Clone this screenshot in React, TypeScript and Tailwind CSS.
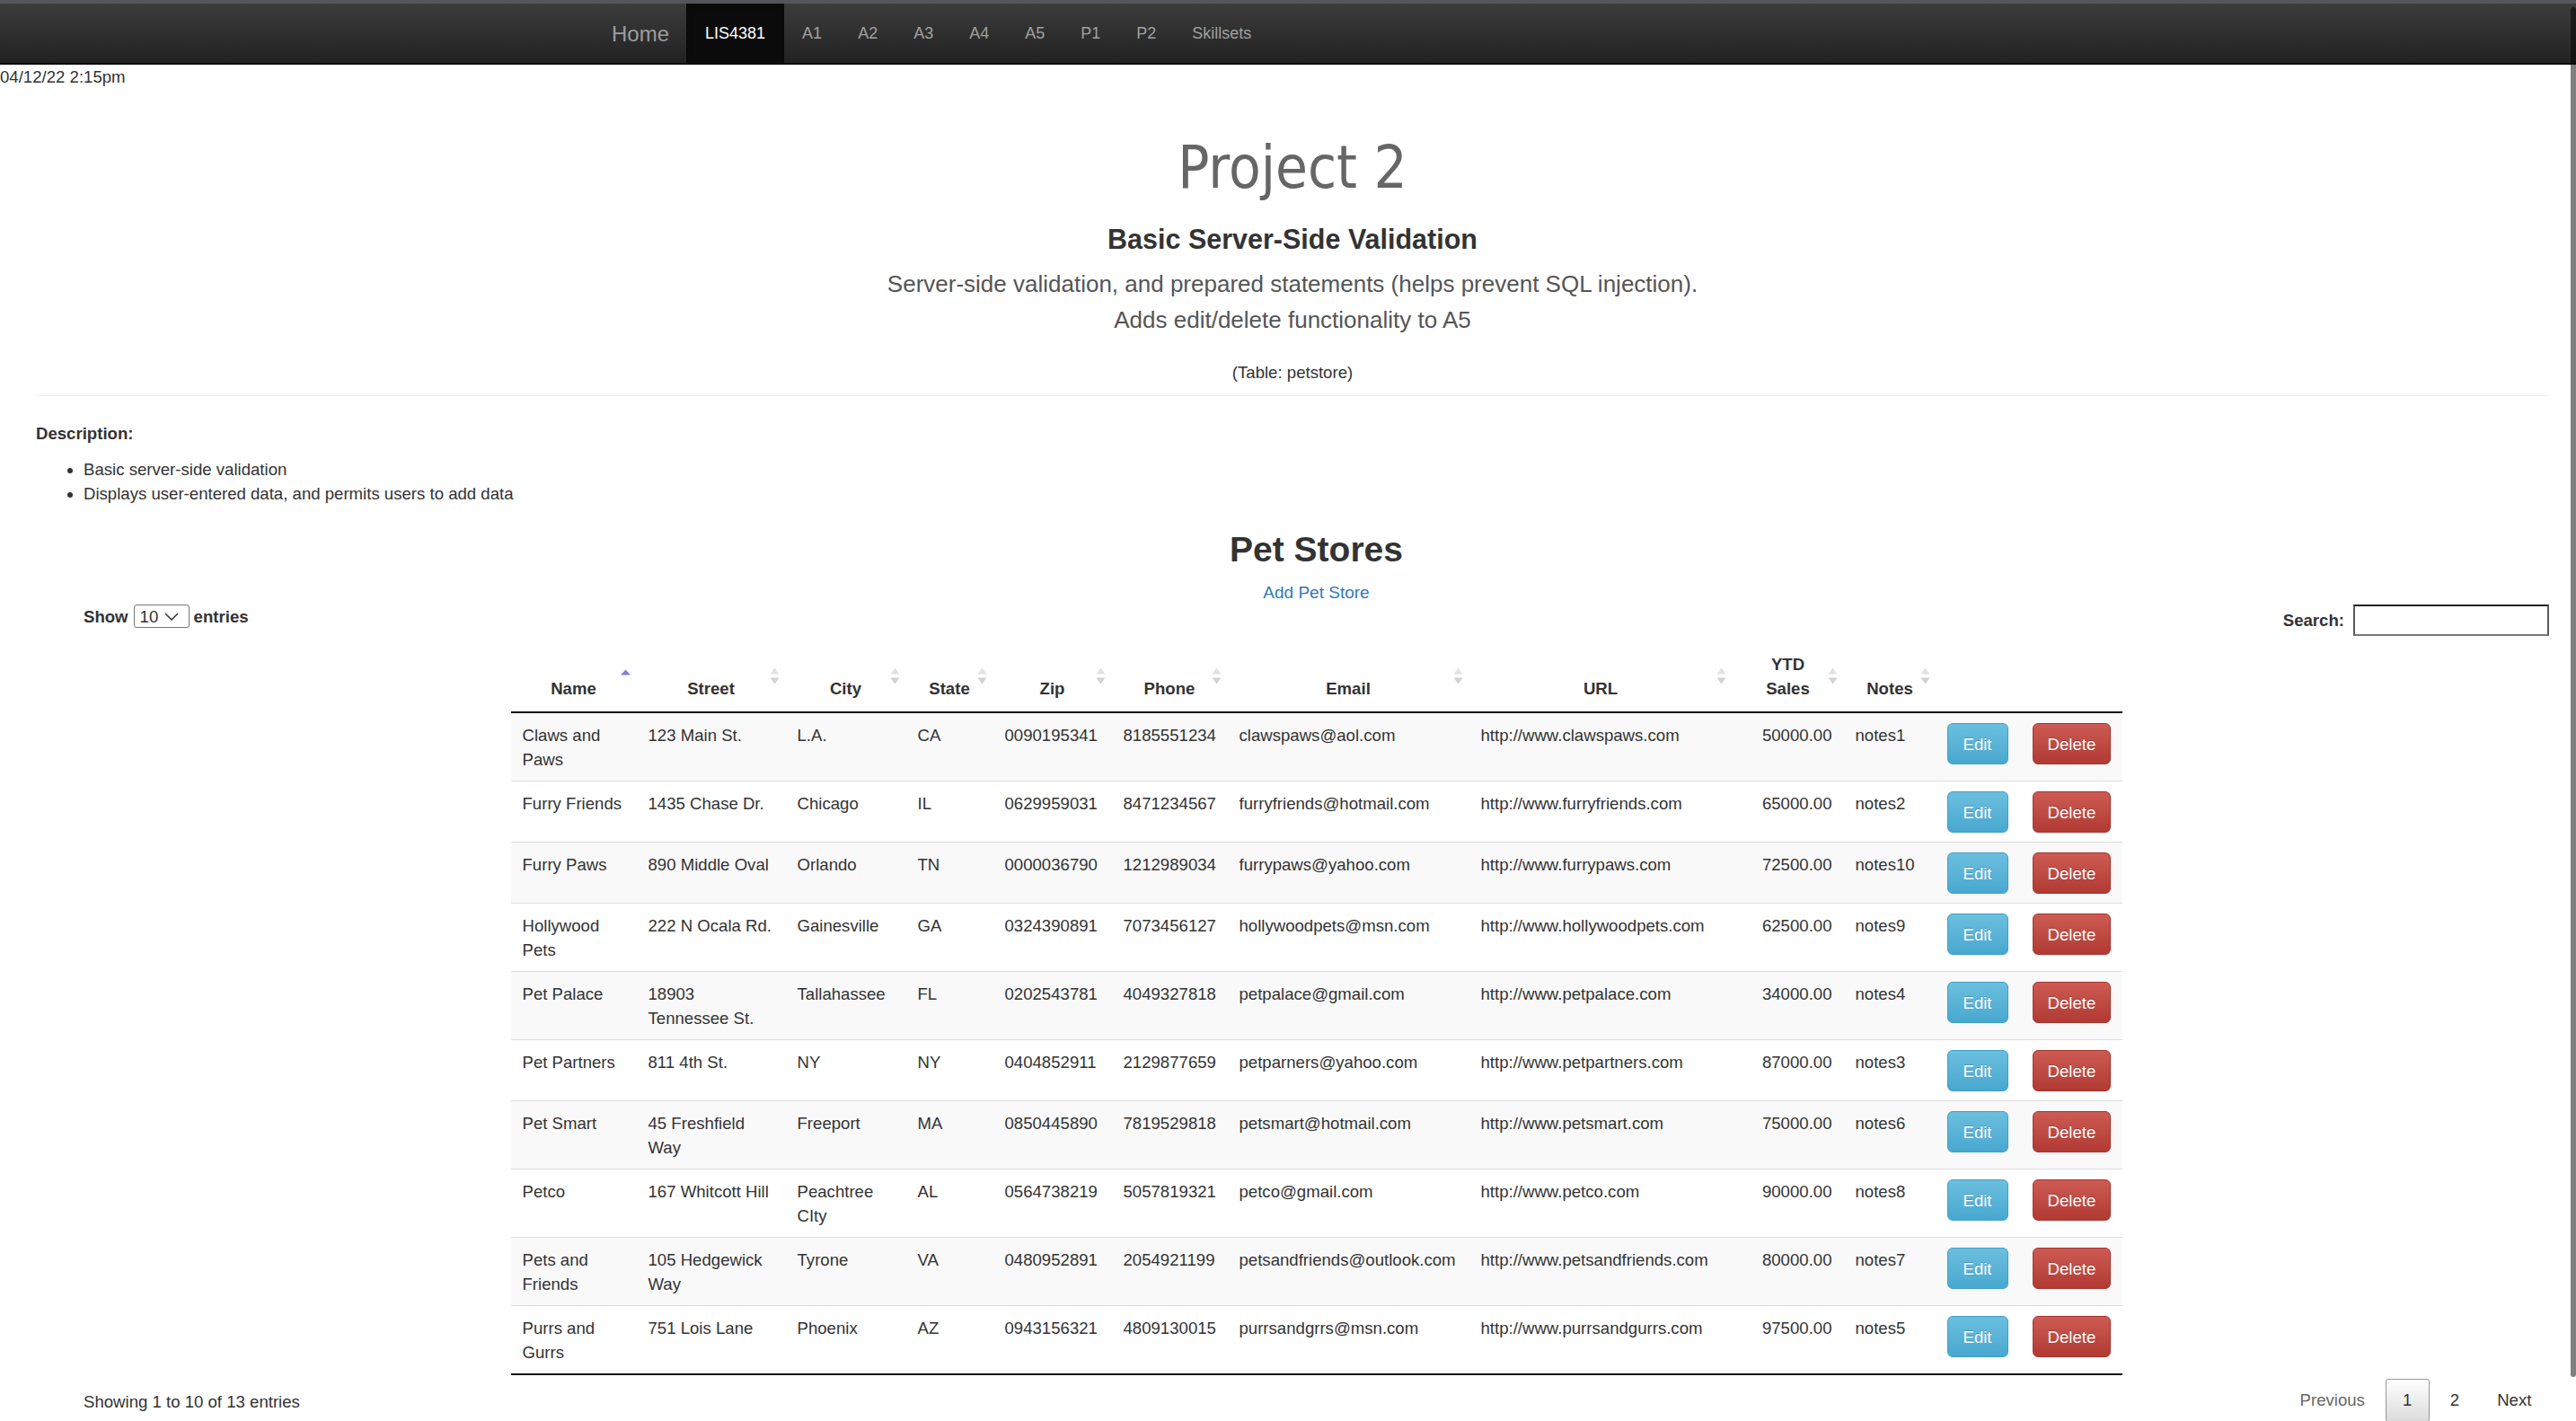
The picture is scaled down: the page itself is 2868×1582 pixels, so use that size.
import React from 'react';

const rows: string[][] = [
  ['Claws and Paws', '123 Main St.', 'L.A.', 'CA', '0090195341', '8185551234', 'clawspaws@aol.com', 'http://www.clawspaws.com', '50000.00', 'notes1'],
  ['Furry Friends', '1435 Chase Dr.', 'Chicago', 'IL', '0629959031', '8471234567', 'furryfriends@hotmail.com', 'http://www.furryfriends.com', '65000.00', 'notes2'],
  ['Furry Paws', '890 Middle Oval', 'Orlando', 'TN', '0000036790', '1212989034', 'furrypaws@yahoo.com', 'http://www.furrypaws.com', '72500.00', 'notes10'],
  ['Hollywood Pets', '222 N Ocala Rd.', 'Gainesville', 'GA', '0324390891', '7073456127', 'hollywoodpets@msn.com', 'http://www.hollywoodpets.com', '62500.00', 'notes9'],
  ['Pet Palace', '18903 Tennessee St.', 'Tallahassee', 'FL', '0202543781', '4049327818', 'petpalace@gmail.com', 'http://www.petpalace.com', '34000.00', 'notes4'],
  ['Pet Partners', '811 4th St.', 'NY', 'NY', '0404852911', '2129877659', 'petparners@yahoo.com', 'http://www.petpartners.com', '87000.00', 'notes3'],
  ['Pet Smart', '45 Freshfield Way', 'Freeport', 'MA', '0850445890', '7819529818', 'petsmart@hotmail.com', 'http://www.petsmart.com', '75000.00', 'notes6'],
  ['Petco', '167 Whitcott Hill', 'Peachtree CIty', 'AL', '0564738219', '5057819321', 'petco@gmail.com', 'http://www.petco.com', '90000.00', 'notes8'],
  ['Pets and Friends', '105 Hedgewick Way', 'Tyrone', 'VA', '0480952891', '2054921199', 'petsandfriends@outlook.com', 'http://www.petsandfriends.com', '80000.00', 'notes7'],
  ['Purrs and Gurrs', '751 Lois Lane', 'Phoenix', 'AZ', '0943156321', '4809130015', 'purrsandgrrs@msn.com', 'http://www.purrsandgurrs.com', '97500.00', 'notes5'],
];

const widths = [140, 166, 134, 97, 132, 129, 269, 293, 124, 103, 94, 113];

function SortIcon({ asc }: { asc?: boolean }) {
  return (
    <svg
      className="absolute right-[7px] top-1/2 -translate-y-1/2"
      width="11"
      height="19"
      viewBox="0 0 11 19"
    >
      {asc ? (
        <polygon points="5.5,2 11,8 0,8" fill="#7b83d9" />
      ) : (
        <>
          <polygon points="5.5,0 10.5,7 0.5,7" fill="#e2e2e2" />
          <polygon points="0.5,11 10.5,11 5.5,18" fill="#d2d2d2" />
        </>
      )}
    </svg>
  );
}

function NavLink({ label, active }: { label: string; active?: boolean }) {
  if (active) {
    return (
      <li className="flex items-center bg-[#0b0b0b] px-[21px] text-white shadow-[inset_0_3px_9px_rgba(0,0,0,0.25)]">
        {label}
      </li>
    );
  }
  return <li className="flex items-center px-[20px] text-[#a0a0a0]">{label}</li>;
}

export default function App() {
  const headers: { label: React.ReactNode; icon?: 'asc' | 'both' }[] = [
    { label: 'Name', icon: 'asc' },
    { label: 'Street', icon: 'both' },
    { label: 'City', icon: 'both' },
    { label: 'State', icon: 'both' },
    { label: 'Zip', icon: 'both' },
    { label: 'Phone', icon: 'both' },
    { label: 'Email', icon: 'both' },
    { label: 'URL', icon: 'both' },
    { label: (<>YTD<br />Sales</>), icon: 'both' },
    { label: 'Notes', icon: 'both' },
    { label: '' },
    { label: '' },
  ];

  return (
    <div className="relative h-[1582px] w-full overflow-hidden bg-white font-['Liberation_Sans',Arial,sans-serif] text-[18.6px] leading-[27px] text-[#333]">
      {/* Navbar */}
      <div className="h-[4px] bg-[#53565a]" />
      <nav className="h-[68px] border-b-2 border-[#080808] bg-linear-to-b from-[#3c3c3c] to-[#222]">
        <div className="mx-auto flex h-full w-[1548px]">
          <a className="flex items-center pl-[21px] pr-[19px] text-[24px] text-[#9d9d9d]">Home</a>
          <ul className="flex text-[18px]">
            <NavLink label="LIS4381" active />
            <NavLink label="A1" />
            <NavLink label="A2" />
            <NavLink label="A3" />
            <NavLink label="A4" />
            <NavLink label="A5" />
            <NavLink label="P1" />
            <NavLink label="P2" />
            <NavLink label="Skillsets" />
          </ul>
        </div>
      </nav>

      <div className="pt-[2px] leading-[24px]">04/12/22 2:15pm</div>

      <div className="pl-[40px] pr-[30px]">
        <div className="text-center">
          <h1 className="mt-[49px] font-['DejaVu_Sans_Condensed','DejaVu_Sans',sans-serif] text-[65px] leading-[80px] text-[#666] font-stretch-condensed">
            Project 2
          </h1>
          <h2 className="mt-[19px] text-[30.5px] font-bold leading-[40px] text-[#333]">Basic Server-Side Validation</h2>
          <p className="mt-[10px] text-[26px] leading-[40px] text-[#555]">
            Server-side validation, and prepared statements (helps prevent SQL injection).
            <br />
            Adds edit/delete functionality to A5
          </p>
          <p className="mt-[25px]">(Table: petstore)</p>
        </div>
        <div className="mt-[12px] border-t border-[#eee]" />

        <div className="mt-[28px] font-bold">Description:</div>
        <ul className="mt-[13px] list-disc pl-[53px]">
          <li>Basic server-side validation</li>
          <li>Displays user-entered data, and permits users to add data</li>
        </ul>

        <div className="ml-[53px]">
          <h2 className="mt-[24px] text-center text-[39px] font-bold leading-[50px] text-[#333]">Pet Stores</h2>
          <div className="mt-[9px] text-center">
            <a className="text-[19px] text-[#337ab7]">Add Pet Store</a>
          </div>

          {/* Controls */}
          <div className="flex items-start justify-between">
            <div className="flex h-[26px] items-center font-bold">
              <span>Show</span>
              <div className="ml-[6px] flex h-[26px] w-[62px] items-center gap-[7px] rounded-[3px] border border-[#767676] pl-[6px] font-normal">
                <span>10</span>
                <svg width="16" height="9" viewBox="0 0 16 9">
                  <polyline points="1,1 8,8 15,1" fill="none" stroke="#333" strokeWidth="1.5" />
                </svg>
              </div>
              <span className="ml-[5px]">entries</span>
            </div>
            <div className="flex h-[35px] items-center font-bold">
              <span>Search:</span>
              <div className="ml-[10px] h-[35px] w-[218px] border-2 border-[#5a5a5a] border-t-[#222] border-b-[#777] bg-white" />
            </div>
          </div>

          {/* Table */}
          <table className="mx-auto mt-[5px] w-[1794px] table-fixed border-separate border-spacing-0 border-b-2 border-[#111]">
            <colgroup>
              {widths.map((w, i) => (
                <col key={i} style={{ width: w }} />
              ))}
            </colgroup>
            <thead>
              <tr>
                {headers.map((h, i) => (
                  <th
                    key={i}
                    className="relative border-b-2 border-[#111] px-[13px] pb-[12px] pt-[13px] text-center align-bottom font-bold"
                  >
                    {h.label}
                    {h.icon === 'asc' && <SortIcon asc />}
                    {h.icon === 'both' && <SortIcon />}
                  </th>
                ))}
              </tr>
            </thead>
            <tbody>
              {rows.map((r, ri) => {
                const td =
                  'px-[13px] pt-[11px] pb-[10px] align-top ' + (ri > 0 ? 'border-t border-[#ddd]' : '');
                return (
                  <tr key={ri} className={ri % 2 === 0 ? 'bg-[#f9f9f9]' : 'bg-white'}>
                    <td className={td}>{r[0]}</td>
                    <td className={td}>{r[1]}</td>
                    <td className={td}>{r[2]}</td>
                    <td className={td}>{r[3]}</td>
                    <td className={td + ' whitespace-nowrap'}>{r[4]}</td>
                    <td className={td + ' whitespace-nowrap'}>{r[5]}</td>
                    <td className={td + ' whitespace-nowrap'}>{r[6]}</td>
                    <td className={td + ' whitespace-nowrap'}>{r[7]}</td>
                    <td className={td + ' whitespace-nowrap text-right'}>{r[8]}</td>
                    <td className={td + ' whitespace-nowrap'}>{r[9]}</td>
                    <td className={td + ' pl-[12px]'}>
                      <button className="block h-[46px] rounded-[6px] border border-[#3fa0c8] bg-linear-to-b from-[#6bbfde] to-[#48a8d0] px-[17px] leading-[27px] text-white [text-shadow:0_-1px_0_rgba(0,0,0,0.2)]">
                        Edit
                      </button>
                    </td>
                    <td className={td}>
                      <button className="block h-[46px] rounded-[6px] border border-[#a8332d] bg-linear-to-b from-[#cd5b53] to-[#b13a33] px-[16px] leading-[27px] text-white [text-shadow:0_-1px_0_rgba(0,0,0,0.2)]">
                        Delete
                      </button>
                    </td>
                  </tr>
                );
              })}
            </tbody>
          </table>

          {/* Info + pagination */}
          <div className="mt-[4px] flex items-start justify-between">
            <div className="pt-[12px]">Showing 1 to 10 of 13 entries</div>
            <div className="flex">
              <span className="border border-transparent px-[18.6px] py-[9.3px] text-[#666]">Previous</span>
              <span className="ml-[3px] rounded-[3px] border border-[#979797] bg-linear-to-b from-white to-[#dcdcdc] px-[18.6px] py-[9.3px]">
                1
              </span>
              <span className="ml-[3px] border border-transparent px-[18.6px] py-[9.3px]">2</span>
              <span className="ml-[3px] border border-transparent px-[18.6px] py-[9.3px]">Next</span>
            </div>
          </div>
        </div>
      </div>

      {/* overlay scrollbar thumb */}
      <div className="absolute right-0 top-[8px] h-[1525px] w-[6px] rounded-full bg-black/50" />
    </div>
  );
}
